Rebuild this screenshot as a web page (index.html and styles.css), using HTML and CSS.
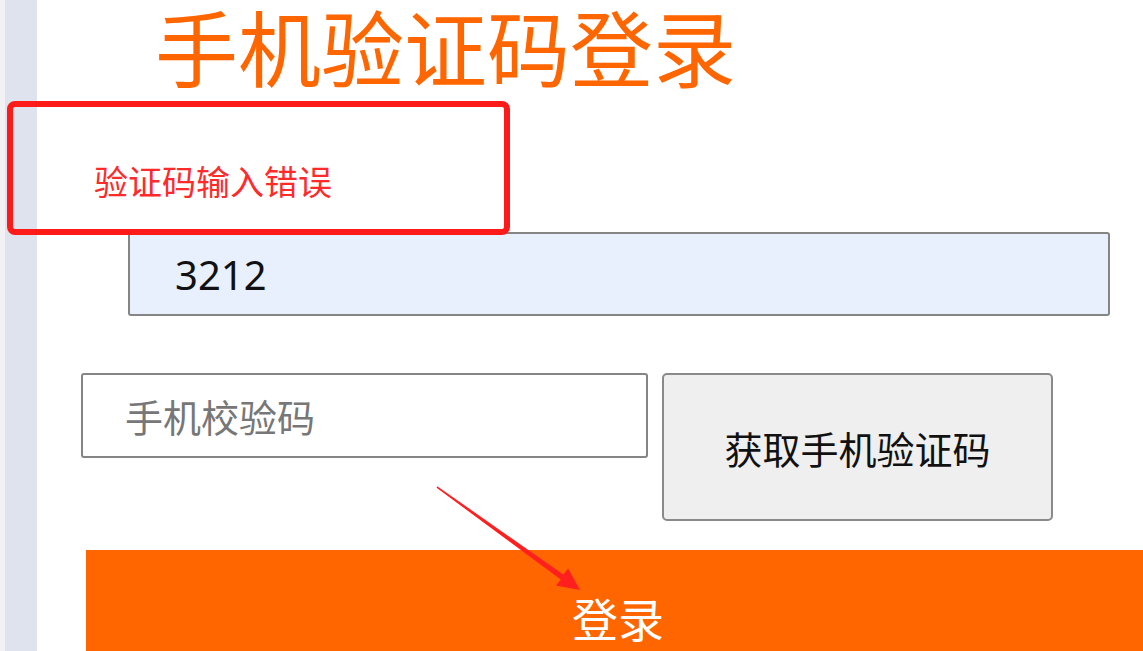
FILE: index.html
```html
<!DOCTYPE html>
<html lang="zh-CN">
<head>
    <meta charset="UTF-8">
    <meta name="viewport" content="width=device-width, initial-scale=1.0">
    <title>手机验证码登录</title>
    <link rel="stylesheet" href="styles.css">
</head>
<body>

<div class="rail"></div>

<div class="main">
    <h1 class="title">手机验证码登录</h1>

    <div class="error-msg">验证码输入错误</div>

    <input class="field code-field" type="text" value="3212">

    <div class="sms-row">
        <input class="field sms-field" type="text" placeholder="手机校验码">
        <button class="sms-btn">获取手机验证码</button>
    </div>

    <div class="login-bar">登录</div>
</div>

<!-- 标注：红框和箭头 -->
<div class="mark-box"></div>
<svg class="mark-arrow" width="160" height="120" viewBox="0 0 160 120">
    <polygon points="7.2,6.2 133.3,94.5 138.2,88.6 150,110 126,105.6 130.8,99.4 6.6,7.8" fill="#ff1f1f"/>
</svg>

</body>
</html>
```

FILE: styles.css
```css
html, body {
    height: 100%;
}
body {
    margin: 0;
    display: flex;
    position: relative;
    overflow: hidden;
    background-color: #fff;
    font-family: "Noto Sans CJK SC", "Noto Sans", sans-serif;
}
.rail {
    width: 32px;
    flex-shrink: 0;
    background-color: #dfe3ee;
    border-left: 5px solid #f2f2f4;
}
.main {
    flex: 1;
    display: flex;
    flex-direction: column;
    align-items: flex-start;
}
.main > * {
    flex-shrink: 0;
}
.title {
    margin: 0 0 0 118px;
    height: 100px;
    font-size: 83px;
    line-height: 90px;
    font-weight: normal;
    color: #ff6600;
    white-space: nowrap;
}
.error-msg {
    margin: 61px 0 0 57px;
    font-size: 34px;
    line-height: 40px;
    color: #ff2a2a;
}
.field {
    box-sizing: border-box;
    border: 2px solid #858585;
    border-radius: 3px;
    outline: none;
    font-family: "Noto Sans", "Noto Sans CJK SC", sans-serif;
}
.code-field {
    margin: 31px 0 0 91px;
    width: 982px;
    height: 84px;
    padding: 0 0 0 45px;
    background-color: #e8f0fe;
    font-size: 40px;
    color: #111;
}
.sms-row {
    display: flex;
    align-items: flex-start;
    gap: 14px;
    margin: 57px 0 0 44px;
}
.sms-field {
    width: 567px;
    height: 85px;
    padding: 0 0 0 42px;
    background-color: #fff;
    font-family: "Noto Sans CJK SC", sans-serif;
    font-size: 38px;
}
.sms-field::placeholder {
    color: #777;
}
.sms-btn {
    box-sizing: border-box;
    width: 391px;
    height: 148px;
    background-color: #efefef;
    border: 2px solid #8a8a8a;
    border-radius: 5px;
    font-family: "Noto Sans CJK SC", sans-serif;
    font-size: 38px;
    color: #111;
}
.login-bar {
    margin: 29px 0 0 49px;
    width: 1064px;
    height: 110px;
    box-sizing: border-box;
    padding-top: 42px;
    background-color: #ff6600;
    color: #fff;
    font-size: 46px;
    line-height: 50px;
    text-align: center;
}
.mark-box {
    position: absolute;
    left: 7px;
    top: 101px;
    width: 503px;
    height: 134px;
    box-sizing: border-box;
    border: 6px solid #ff1a1a;
    border-radius: 8px;
}
.mark-arrow {
    position: absolute;
    left: 430px;
    top: 480px;
}
```
